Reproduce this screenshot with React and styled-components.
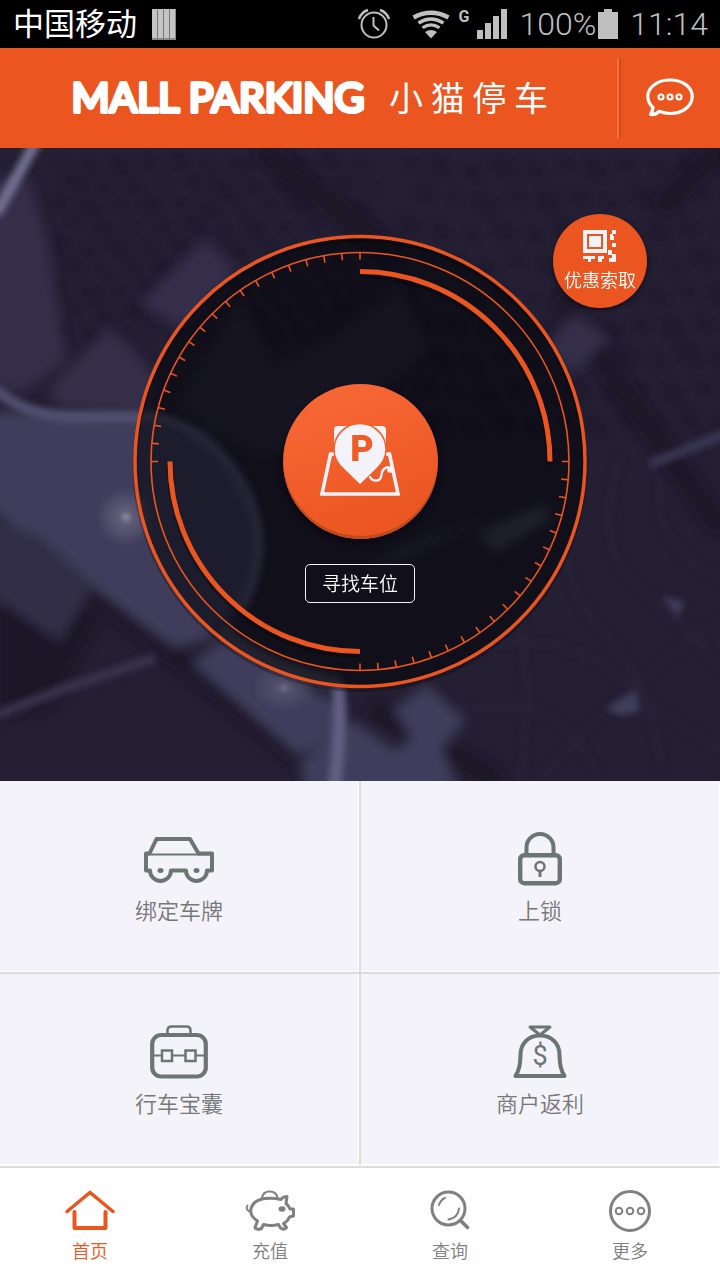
import React from "react";
import styled, { createGlobalStyle } from "styled-components";

const ORANGE = "#eb5620";
const PALE = "#f4f3f9";

const GlobalStyle = createGlobalStyle`
  * { box-sizing: border-box; }
  body {
    margin: 0;
    background: #fefefe;
    font-family: Roboto, "Noto Sans CJK SC", sans-serif;
  }
  button {
    margin: 0;
    padding: 0;
    border: 0;
    background: none;
    font-family: inherit;
    cursor: pointer;
  }
  svg { display: block; flex: none; }
`;

const Page = styled.div`
  display: flex;
  flex-direction: column;
  min-height: 100vh;
`;

const StatusBar = styled.div`
  display: flex;
  align-items: center;
  justify-content: space-between;
  height: 48px;
  padding: 0 12px 0 13px;
  background: #000;
  color: #bfbfbf;
`;

const Carrier = styled.div`
  display: flex;
  align-items: center;
  gap: 15px;
`;

const CarrierName = styled.span`
  padding-bottom: 5px;
  color: #fff;
  font-family: "Noto Sans CJK SC", sans-serif;
  font-size: 31px;
  font-weight: 400;
  line-height: 40px;
`;

const StatusGroup = styled.div`
  display: flex;
  align-items: center;
  gap: ${(p) => p.$gap}px;
`;

const StatusText = styled.span`
  font-size: 32px;
  font-weight: 300;
  line-height: 48px;
`;

const NetworkType = styled.span`
  align-self: flex-start;
  font-size: 16px;
  font-weight: 700;
  line-height: 16px;
`;

const Header = styled.header`
  display: flex;
  align-items: center;
  height: 100px;
  background: ${ORANGE};
  color: #fff;
`;

const Brand = styled.h1`
  flex: 1;
  display: flex;
  align-items: center;
  justify-content: center;
  gap: 22px;
  margin: 0;
  white-space: nowrap;
`;

const BrandHan = styled.span`
  padding-bottom: 2px;
  font-family: "Noto Sans CJK SC", sans-serif;
  font-size: 34px;
  font-weight: 400;
  line-height: 48px;
`;

const MessageButton = styled.button`
  display: flex;
  align-items: center;
  justify-content: center;
  width: 103px;
  height: 80px;
  border-left: 2px solid #f0703f;
  box-shadow: inset 2px 0 0 #d44a18;
`;

const Hero = styled.section`
  position: relative;
  display: flex;
  justify-content: center;
  padding: 86px 20px 92px;
  background: #242033;
  overflow: hidden;
`;

const MapLayer = styled.div`
  position: absolute;
  inset: 0;
  svg { width: 100%; height: 100%; }
`;

const Dial = styled.div`
  position: relative;
  display: flex;
  flex-direction: column;
  align-items: center;
  gap: 25px;
  width: 454px;
  height: 455px;
  padding-top: 150px;
`;

const DialRings = styled.div`
  position: absolute;
  inset: 0;
`;

const ParkButton = styled.button`
  position: relative;
  display: flex;
  align-items: center;
  justify-content: center;
  width: 155px;
  height: 155px;
  padding-bottom: 3px;
  border-radius: 50%;
  background: linear-gradient(160deg, #f86837 5%, #ea5520 90%);
  box-shadow: inset 0 -3px 0 #c14a1d, 0 3px 6px rgba(0, 0, 0, 0.5);
`;

const FindButton = styled.button`
  position: relative;
  width: 110px;
  height: 39px;
  padding-top: 2px;
  border: 1px solid #f4f3f9;
  border-radius: 5px;
  color: #fff;
  font-size: 19px;
  font-weight: 350;
  line-height: 35px;
`;

const CouponButton = styled.button`
  position: absolute;
  top: 66px;
  right: 73px;
  display: flex;
  flex-direction: column;
  align-items: center;
  gap: 6px;
  width: 94px;
  height: 94px;
  padding-top: 16px;
  border-radius: 50%;
  background: ${ORANGE};
  box-shadow: 0 2px 5px rgba(0, 0, 0, 0.5);
  color: #fff;
  font-size: 18px;
  font-weight: 350;
  line-height: 24px;
  white-space: nowrap;
`;

const Tiles = styled.main`
  display: grid;
  grid-template-columns: 1fr 1fr;
  gap: 2px;
  background: #dcdcdd;
`;

const Tile = styled.button`
  display: flex;
  flex-direction: column;
  align-items: center;
  gap: 9px;
  height: 191px;
  padding-top: 51px;
  border: 0 solid #fff;
  border-width: 0 1px 1px 0;
  background: ${PALE};
  color: #777;
  font-size: 22px;
  font-weight: 350;
  line-height: 34px;
`;

const TabBar = styled.nav`
  display: grid;
  grid-template-columns: repeat(4, 1fr);
  flex: 1;
  margin-top: 1px;
  border-top: 2px solid #dcdcdc;
  background: #fefefe;
`;

const Tab = styled.a`
  display: flex;
  flex-direction: column;
  align-items: center;
  gap: 7px;
  padding-top: 22px;
  color: ${(p) => (p.$active ? ORANGE : "#808080")};
  font-size: 18px;
  font-weight: 350;
  line-height: 26px;
  text-decoration: none;
`;

const BrandLogo = () => (
  <svg width="298" height="48" viewBox="0 0 298 48" overflow="visible">
    <text
      x="149"
      y="38"
      textAnchor="middle"
      fill="#fff"
      stroke="#fff"
      strokeWidth="4"
      strokeLinejoin="round"
      fontFamily="Lato, sans-serif"
      fontWeight="400"
      fontSize="41"
    >
      MALL PARKING
    </text>
  </svg>
);

const NoteBarsIcon = () => (
  <svg width="24" height="31" viewBox="0 0 24 31">
    <rect width="24" height="31" fill="#8a8a8a" />
    <path d="M0 0h5v29H0zM6 0h5v29H6zM12 0h5v29h-5zM18 0h5v29h-5z" fill="#c4c4c4" />
    <path d="M5.500 1v30M11.500 1v30M17.500 1v30" stroke="#777" strokeWidth="1" />
  </svg>
);

const AlarmIcon = () => (
  <svg width="32" height="32" viewBox="0 0 32 32" fill="none" stroke="#bfbfbf">
    <circle cx="16" cy="17" r="12.500" strokeWidth="2" />
    <path d="M15.500 9v8.500l5.500 5" strokeWidth="2" />
    <path d="M1 11Q3.500 4 10 2M31 11Q28.500 4 22 2" strokeWidth="2.500" />
  </svg>
);

const WifiIcon = () => (
  <svg width="38" height="30" viewBox="0 0 38 30" fill="none" stroke="#bfbfbf">
    <path d="M1.500 8.500Q19-1 36.500 8.500" strokeWidth="4.500" />
    <path d="M6.500 14Q19 6 31.500 14" strokeWidth="3.500" />
    <path d="M10.500 18.800Q19 13 27.500 18.800" strokeWidth="3.200" />
    <path d="M13 23Q19 19 25 23L19 29.500z" fill="#bfbfbf" stroke="none" />
  </svg>
);

const SignalIcon = () => (
  <svg width="30" height="30" viewBox="0 0 30 30" fill="#bfbfbf">
    <path d="M0 21h6v9H0zM8 14h6v16H8zM16 7h6v23h-6zM24 0h6v30h-6z" />
  </svg>
);

const BatteryIcon = () => (
  <svg width="20" height="30" viewBox="0 0 20 30" fill="#bfbfbf">
    <path d="M6 0h8v3h6v27H0V3h6z" />
  </svg>
);

const MessageIcon = () => (
  <svg width="48" height="40" viewBox="0 0 48 40" fill="none" stroke="#fff">
    <path
      d="M24 2C11.500 2 1.800 9 1.800 18.500c0 4.500 2 8 5.200 11-.3 3-1.300 5-2.500 7 3.500.5 6.500-1 8.500-3.200 3.300 1.300 7 2.200 11 2.200 12.500 0 22.200-7.300 22.200-17S36.500 2 24 2z"
      strokeWidth="3.200"
      strokeLinejoin="round"
    />
    <g strokeWidth="2.200">
      <circle cx="15" cy="19" r="2.500" />
      <circle cx="24" cy="19" r="2.500" />
      <circle cx="33" cy="19" r="2.500" />
    </g>
  </svg>
);

// small street blocks seen through the blur, laid out on two slanted grids
const blocks = [];
for (let r = 0; r < 9; r++) {
  for (let c = 0; c < 11; c++) {
    blocks.push([60 + c * 30 + (r % 2) * 14, 12 + r * 21 + ((c * 7) % 9), 4 + ((r * 5 + c * 3) % 7)]);
    blocks.push([410 + c * 31 + (r % 2) * 15, 14 + r * 32 + ((c * 5) % 11), 5 + ((r * 3 + c * 5) % 8)]);
  }
}

const CityMap = () => (
  <svg viewBox="0 0 720 633" preserveAspectRatio="xMidYMid slice">
    <defs>
      <filter id="soft" x="-10%" y="-10%" width="120%" height="120%">
        <feGaussianBlur stdDeviation="6" />
      </filter>
      <filter id="fine" x="-10%" y="-10%" width="120%" height="120%">
        <feGaussianBlur stdDeviation="3" />
      </filter>
      <radialGradient id="lamp">
        <stop offset="0" stopColor="#8c889a" />
        <stop offset="0.250" stopColor="#6c6984" stopOpacity="0.700" />
        <stop offset="1" stopColor="#6c6984" stopOpacity="0" />
      </radialGradient>
    </defs>
    <rect width="720" height="633" fill="#241f33" />
    <g filter="url(#fine)" fill="#1d192a" opacity="0.450">
      {blocks.map(([x, y, s]) => (
        <ellipse key={x + "-" + y} cx={x} cy={y} rx={s + 2} ry={s * 0.7} transform={`rotate(38 ${x} ${y})`} />
      ))}
    </g>
    <g filter="url(#fine)" fill="none" stroke="#2b273b" strokeWidth="6" opacity="0.600">
      <path d="M570 330Q545 420 600 480T660 620M620 310Q590 400 640 440T720 520M660 330Q650 400 720 430" />
      <path d="M480 500Q560 480 620 530T720 600M470 560Q560 540 600 633M540 633Q600 560 720 470M500 420Q540 500 520 633" />
    </g>
    <g filter="url(#soft)">
      <path d="M260 0L400 110M150 330L240 200M0 375L185 515L330 633M560 150L720 380M720 0L660 60M370 560L500 633" stroke="#1b1728" strokeWidth="18" fill="none" />
      <path d="M0 395L100 470L50 560L0 570z" fill="#1a1627" />
      <path d="M-20 30L28 30L47 90L58 160L66 212L22 245L-20 235z" fill="#352f48" />
      <path d="M111 178L155 228L150 268L60 258L48 242z" fill="#362f49" />
      <path d="M205 91L236 122L182 182L140 155z" fill="#362f4b" />
      <path d="M240 150L275 215L330 190L400 140L430 200L330 290L260 310L175 260z" fill="#2e2a40" />
      <path d="M575 165L608 190L575 226L545 200z" fill="#362f48" />
      <path d="M-20 262L140 270L205 285L248 340L262 400L248 452L210 490L176 500L150 482L-20 352z" fill="#3f3c5c" />
      <path d="M-20 366L40 388L94 436L60 494L-20 440z" fill="#332e46" />
      <path d="M192 515L224 490L345 560L338 590L298 607z" fill="#3f3c5c" />
      <path d="M426 536L466 572L442 600L465 660H310L300 615L352 572L395 602L412 590L394 562z" fill="#3f3c5c" />
      <path d="M478 385L545 355L550 372L495 405z" fill="#44445c" />
      <path d="M360 430L500 365L400 400z" fill="#3a3a50" />
    </g>
    <g filter="url(#fine)" fill="none">
      <path d="M36-6L-4 66" stroke="#716f90" strokeWidth="11" />
      <path d="M-6 240Q24 268 70 269H145Q205 275 240 335T240 460" stroke="#535071" strokeWidth="11" />
      <path d="M-6 568L60 542L155 510" stroke="#37334c" strokeWidth="10" />
      <path d="M650 316L730 284" stroke="#3a3754" strokeWidth="9" />
      <path d="M338 536Q342 580 334 640" stroke="#625f82" strokeWidth="13" />
      <path d="M662 448L684 454L678 470zM606 560L636 542L640 563L620 568z" fill="#3f3c5c" />
      <path d="M220 480Q260 520 340 535" stroke="#4c4960" strokeWidth="14" />
    </g>
    <circle cx="126" cy="369" r="30" fill="url(#lamp)" />
    <ellipse cx="284" cy="540" rx="32" ry="24" fill="url(#lamp)" opacity="0.600" />
  </svg>
);

const ticks = Array.from({ length: 19 }, (_, i) => i * 5);

const Rings = () => (
  <svg width="454" height="455" viewBox="-227 -227.500 454 455" fill="none" stroke={ORANGE} overflow="visible">
    <circle r="225" fill="rgba(2, 3, 7, 0.560)" stroke="none" />
    <g stroke="#000" opacity="0.250">
      <circle r="225" cy="3" strokeWidth="5" />
      <path d="M0-187A190 190 0 0 1 190 3M-190 3A190 190 0 0 0 0 193" strokeWidth="7" />
    </g>
    <circle r="225" strokeWidth="3.500" />
    <circle r="209" strokeWidth="1.600" />
    <path d="M0-190A190 190 0 0 1 190 0M-190 0A190 190 0 0 0 0 190" strokeWidth="5" />
    {ticks.map((a) => (
      <path key={a} d="M0 209V202M0-209V-202" strokeWidth="1.600" transform={`rotate(${-a})`} />
    ))}
  </svg>
);

const PinIcon = () => (
  <svg width="82" height="74" viewBox="0 0 82 74">
    <path d="M15 20V7q0-4 4-4h44q4 0 4 4v13z" fill={PALE} />
    <path d="M11.500 31H70.500L79 71H3z" fill="none" stroke={PALE} strokeWidth="3.600" />
    <path d="M41 0.500a26 26 0 0 1 26 26q0 11-10 20L41 62 25 46.500Q15 38 15 26.500a26 26 0 0 1 26-26z" fill={PALE} stroke="#f1602c" strokeWidth="1.500" />
    <path d="M51 54q2 4 7 3.500 4-.5 4.500-6t5-7q4-1 5 3" fill="none" stroke={PALE} strokeWidth="2.500" strokeLinecap="round" />
    <circle cx="71" cy="47" r="2.800" fill={PALE} />
    <text x="43" y="38" textAnchor="middle" fill="#ee5c28" fontFamily="Roboto, sans-serif" fontWeight="900" fontSize="36">P</text>
  </svg>
);

const QrIcon = () => (
  <svg width="34" height="33" viewBox="0 0 34 33" fill={PALE}>
    <path d="M0 0h24v23H0zM4 4v15h16V4z" fillRule="evenodd" />
    <path d="M6 6h12v11H6z" />
    <path d="M29 0h4v4h-3v2h1v4h-4V4h2zM29 13h4v4h-4zM25 20h4v4h4v8h-7v-4h3v-3h-4zM0 26h12v3H8v3H5v-3H0zM15 26h6v3h-2v3h-4z" />
  </svg>
);

const strokeProps = { fill: "none", stroke: "#6b7673", strokeLinejoin: "round" };

const CarIcon = () => (
  <svg width="74" height="54" viewBox="0 0 74 54" {...strokeProps}>
    <path
      d="M7.500 21.500L14.500 7H48L56.500 21.500H70V38.500H65A10.500 10.500 0 0 1 44 38.500H29A10.500 10.500 0 0 1 8 38.500H4V21.500z"
      strokeWidth="4"
    />
    <path d="M6 22.500H68" strokeWidth="2" />
    <ellipse cx="18.500" cy="38.500" rx="3" ry="2.500" fill="#6b7673" stroke="none" />
    <ellipse cx="54.500" cy="38.500" rx="3" ry="2.500" fill="#6b7673" stroke="none" />
  </svg>
);

const LockIcon = () => (
  <svg width="44" height="54" viewBox="0 0 44 54" {...strokeProps}>
    <path d="M8.500 22V15.500a13.500 13.500 0 0 1 27 0V22" strokeWidth="4" />
    <rect x="2.200" y="23.200" width="39.600" height="28" rx="4" strokeWidth="4.400" />
    <circle cx="22" cy="34.500" r="4.500" strokeWidth="2.500" />
    <path d="M22 39v6" strokeWidth="3" />
  </svg>
);

const CaseIcon = () => (
  <svg width="58" height="54" viewBox="0 0 58 54" {...strokeProps}>
    <path d="M17.500 8V5.500q0-4 4-4h15q4 0 4 4V8" strokeWidth="2.500" />
    <rect x="2.200" y="10" width="53.600" height="41.500" rx="9" strokeWidth="4.200" />
    <path d="M4 30.500H12M23 30.500H35M46 30.500H54" strokeWidth="2.200" />
    <path d="M12 25.500H22V36H12zM35.500 25.500H45.500V36H35.500z" strokeWidth="2.500" strokeLinejoin="miter" />
  </svg>
);

const BagIcon = () => (
  <svg width="54" height="54" viewBox="0 0 54 54" {...strokeProps}>
    <path d="M17 2H37L27 10z" strokeWidth="3" />
    <path d="M27 10.500C15 10.500 7.500 19 7.500 29.500C7.500 40 6 46 2.500 51H51.500C48 46 46.500 40 46.500 29.500C46.500 19 39 10.500 27 10.500z" strokeWidth="4" />
    <text x="27" y="40" textAnchor="middle" fill="#6b7673" stroke="none" fontFamily="Roboto, sans-serif" fontSize="27" fontWeight="400">$</text>
  </svg>
);

const HomeIcon = () => (
  <svg width="50" height="42" viewBox="0 0 50 42" fill="none" stroke={ORANGE} strokeLinecap="round">
    <path d="M2 21.500L25 2.500L48 21.500" strokeWidth="3.500" />
    <path d="M9.500 22V38H40.500V22" strokeWidth="4" strokeLinejoin="round" />
  </svg>
);

const PigIcon = () => (
  <svg width="50" height="42" viewBox="0 0 50 42" fill="none" stroke="#808080" strokeLinejoin="round" strokeLinecap="round">
    <path
      d="M36 9.500Q38 6.500 42 6.500L41 13.500Q44 16 45 19H48.500V26L44.500 27Q43 31 38.500 33.500L41.500 37.500Q39 40.500 35.500 38L33.500 34.500Q26 36.500 18.500 34.500L16.500 38.500Q11.500 40.500 10 37.500L12.500 31Q4.500 26 6 18.500Q8.500 10 20 8.500Q28 7.500 36 9.500z"
      strokeWidth="3"
    />
    <path d="M17 8Q18 1.500 24.500 1.500Q31.500 1.500 32.500 8" strokeWidth="2" />
    <path d="M4.500 21.500Q0 19 2.500 15.500" strokeWidth="2" />
    <ellipse cx="37" cy="19" rx="3.500" ry="2.800" fill="#808080" stroke="none" />
  </svg>
);

const SearchIcon = () => (
  <svg width="40" height="42" viewBox="0 0 40 42" fill="none" stroke="#808080" strokeLinecap="round">
    <circle cx="18.500" cy="18.500" r="16.500" strokeWidth="3" />
    <path d="M30.500 30.500L37.500 37.500" strokeWidth="3.500" />
    <path d="M9 15Q10.500 10 15 8M29 18.500Q28 28 18.500 29.500" strokeWidth="2" />
  </svg>
);

const MoreIcon = () => (
  <svg width="44" height="42" viewBox="0 0 44 42" fill="none" stroke="#808080">
    <circle cx="22" cy="21" r="19.500" strokeWidth="3" />
    <circle cx="11" cy="21" r="3.300" strokeWidth="2" />
    <circle cx="22" cy="21" r="3.300" strokeWidth="2" />
    <circle cx="33" cy="21" r="3.300" strokeWidth="2" />
  </svg>
);

const tiles = [
  { label: "绑定车牌", Icon: CarIcon },
  { label: "上锁", Icon: LockIcon },
  { label: "行车宝囊", Icon: CaseIcon },
  { label: "商户返利", Icon: BagIcon },
];

const tabs = [
  { label: "首页", Icon: HomeIcon, active: true },
  { label: "充值", Icon: PigIcon },
  { label: "查询", Icon: SearchIcon },
  { label: "更多", Icon: MoreIcon },
];

const App = () => (
  <>
    <GlobalStyle />
    <Page>
      <StatusBar>
        <Carrier>
          <CarrierName>中国移动</CarrierName>
          <NoteBarsIcon />
        </Carrier>
        <StatusGroup $gap={12}>
          <StatusGroup $gap={22}>
            <AlarmIcon />
            <StatusGroup $gap={8}>
              <WifiIcon />
              <NetworkType>G</NetworkType>
              <SignalIcon />
            </StatusGroup>
          </StatusGroup>
          <StatusGroup $gap={2}>
            <StatusText>100%</StatusText>
            <BatteryIcon />
          </StatusGroup>
          <StatusText>11:14</StatusText>
        </StatusGroup>
      </StatusBar>

      <Header>
        <Brand>
          <BrandLogo />
          <BrandHan>小 猫 停 车</BrandHan>
        </Brand>
        <MessageButton aria-label="消息">
          <MessageIcon />
        </MessageButton>
      </Header>

      <Hero>
        <MapLayer>
          <CityMap />
        </MapLayer>
        <Dial>
          <DialRings>
            <Rings />
          </DialRings>
          <ParkButton aria-label="停车">
            <PinIcon />
          </ParkButton>
          <FindButton>寻找车位</FindButton>
        </Dial>
        <CouponButton>
          <QrIcon />
          优惠索取
        </CouponButton>
      </Hero>

      <Tiles>
        {tiles.map(({ label, Icon }) => (
          <Tile key={label}>
            <Icon />
            {label}
          </Tile>
        ))}
      </Tiles>

      <TabBar>
        {tabs.map(({ label, Icon, active }) => (
          <Tab key={label} href="#" $active={active}>
            <Icon />
            {label}
          </Tab>
        ))}
      </TabBar>
    </Page>
  </>
);

export default App;
